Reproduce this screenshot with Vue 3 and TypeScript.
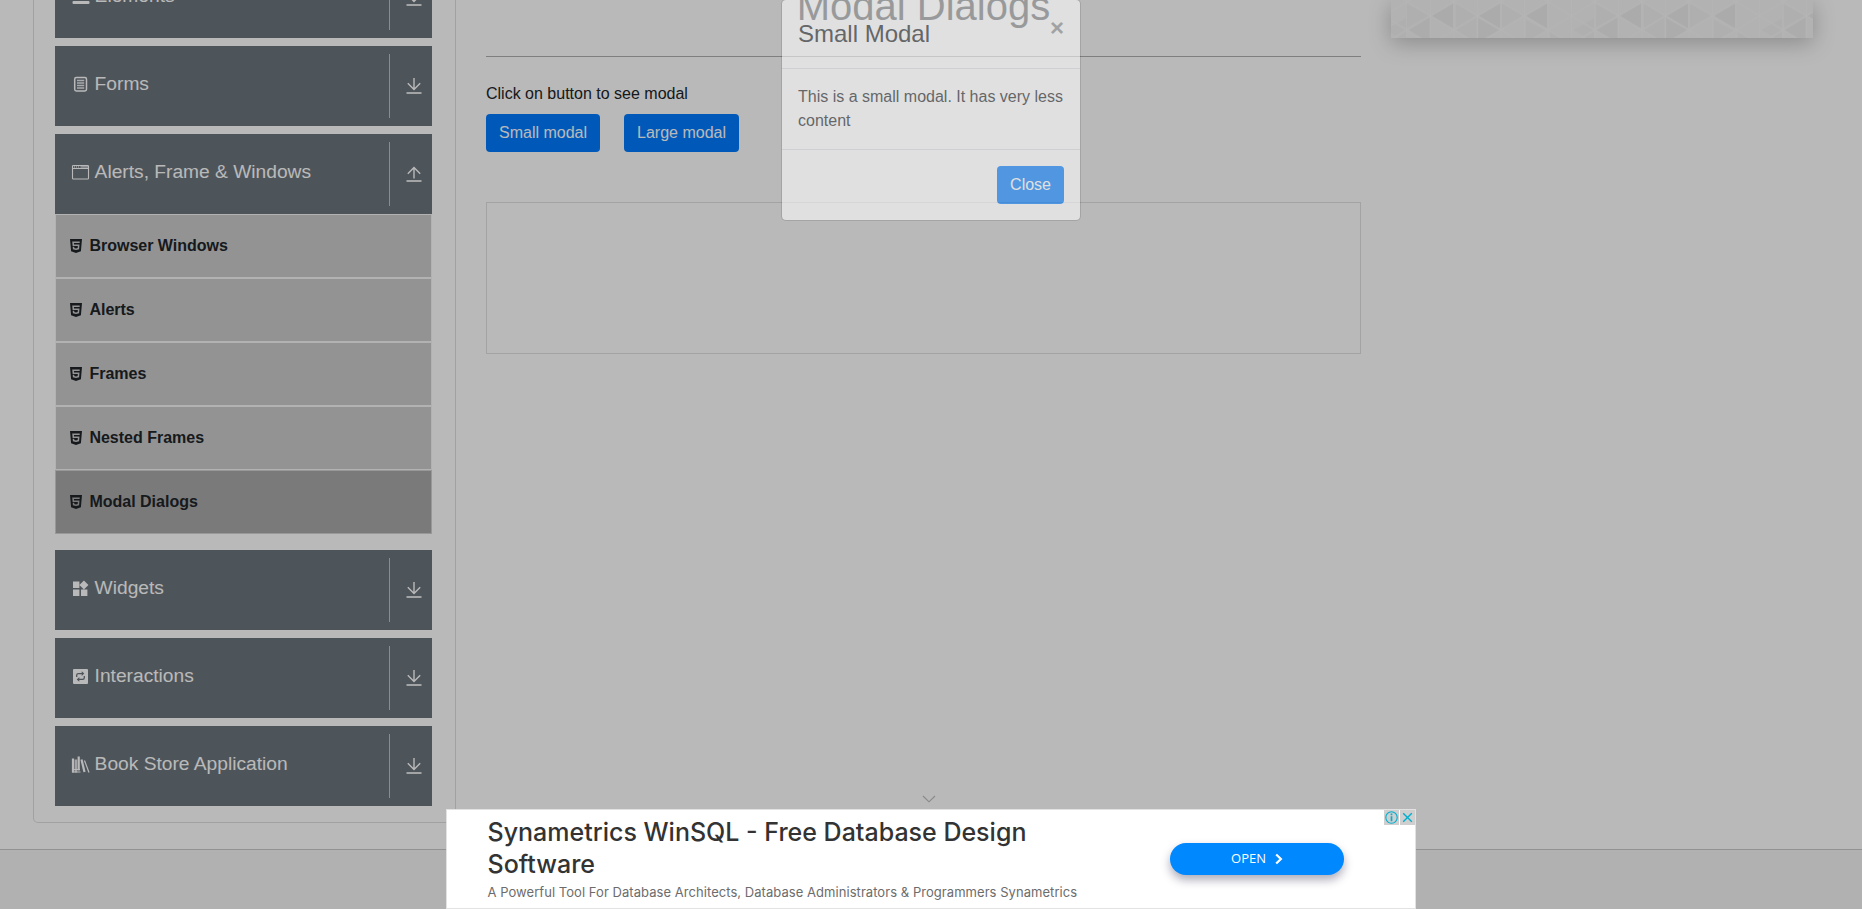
<script setup lang="ts">
interface Group {
  name: string
  icon: string
  open?: boolean
  items?: string[]
}

const groups: Group[] = [
  { name: 'Elements', icon: 'elements' },
  { name: 'Forms', icon: 'forms' },
  {
    name: 'Alerts, Frame & Windows',
    icon: 'window',
    open: true,
    items: ['Browser Windows', 'Alerts', 'Frames', 'Nested Frames', 'Modal Dialogs'],
  },
  { name: 'Widgets', icon: 'widgets' },
  { name: 'Interactions', icon: 'interactions' },
  { name: 'Book Store Application', icon: 'books' },
]
const activeItem = 'Modal Dialogs'
</script>

<template>
  <div class="page">
    <div class="columns">
      <nav class="sidebar">
        <section v-for="g in groups" :key="g.name" class="group">
          <header class="group-head">
            <svg class="group-icon" width="20" height="20" viewBox="0 0 20 20">
              <g v-if="g.icon === 'elements'" fill="currentColor">
                <rect x="1.5" y="3" width="17" height="3" rx="1" />
                <rect x="1.5" y="9" width="17" height="3" rx="1" />
                <rect x="1.5" y="15" width="17" height="3" rx="1" />
              </g>
              <g v-else-if="g.icon === 'forms'" fill="none" stroke="currentColor">
                <rect x="3.7" y="3.6" width="11.8" height="13.3" rx="1.6" stroke-width="1.5" />
                <path d="M6 6.500h7.200M6 9h7.200M6 11.500h7.200M6 14h7.200" stroke-width="1.300" opacity=".85" />
              </g>
              <g v-else-if="g.icon === 'window'" fill="none" stroke="currentColor">
                <rect x="1.500" y="3.500" width="16" height="13.500" rx=".8" stroke-width="1.100" />
                <path d="M1.500 6.500h16" stroke-width="1" />
                <path d="M3 4.900h1M5 4.900h1M7 4.900h1M9.500 4.900h7.500" stroke-width="1.600" opacity=".6" />
              </g>
              <g v-else-if="g.icon === 'widgets'" fill="currentColor">
                <path transform="translate(-.4 1.100) scale(.8)" d="M13 13v8h8v-8h-8zM3 21h8v-8H3v8zM3 3v8h8V3H3zm13.66-1.31L11 7.34 16.66 13l5.66-5.66-5.66-5.65z" />
              </g>
              <g v-else-if="g.icon === 'interactions'">
                <rect x="2" y="3" width="15" height="15" rx="1" fill="currentColor" />
                <path class="loop" d="M5.700 11V9.200q0-1.600 1.600-1.600h4M13.300 10v1.800q0 1.600-1.600 1.600h-4" />
                <path class="loop-tip" d="M10.700 5.300l2.600 2.300-2.600 2.300zM8.300 11.100l-2.600 2.300 2.600 2.300z" />
              </g>
              <g v-else fill="none" stroke="currentColor">
                <path d="M2 4.500v14M7.700 2.500v14" stroke-width="2.200" />
                <path d="M4.900 5.500v13" stroke-width="2.600" opacity=".8" />
                <path d="M1 15.500h8M1 18h8.500" stroke-width="1" />
                <path d="M10.500 5.500l3 12.500" stroke-width="2.200" />
                <path d="M13.500 6.500l4.500 12" stroke-width="1.200" />
              </g>
            </svg>
            <span class="group-name">{{ g.name }}</span>
            <span class="toggle">
              <svg width="16" height="18" viewBox="0 0 16 18" fill="none" stroke="currentColor" stroke-width="1.4">
                <path v-if="g.open" d="M8 13.500V2.500M1.800 8.700L8 2.500l6.200 6.200" />
                <path v-else d="M8 1v11.500M1.800 6.200L8 12.400l6.200-6.200" />
                <path d="M.5 16h15" stroke-width="1.6" />
              </svg>
            </span>
          </header>
          <ul v-if="g.items" class="items">
            <li v-for="i in g.items" :key="i" :class="{ active: i === activeItem }">
              <svg width="12" height="16" viewBox="0 0 384 512" fill="currentColor">
                <path d="M0 32l34.9 395.8L191.5 480l157.6-52.2L384 32H0zm308.2 127.9H124.4l4.1 49.4h175.6l-13.6 148.4-97.9 27v.3h-1.1l-98.7-27.3-6-75.8h47.7L138 320l53.5 14.5 53.7-14.5 6-62.2H84.3L71.5 112.2h241.1l-4.4 47.7z" />
              </svg>
              <span>{{ i }}</span>
            </li>
          </ul>
        </section>
      </nav>

      <main class="main">
        <h1>Modal Dialogs</h1>
        <hr />
        <p>Click on button to see modal</p>
        <div class="buttons">
          <button class="btn">Small modal</button>
          <button class="btn">Large modal</button>
        </div>
        <div class="frame"></div>
      </main>

      <aside class="promo">
        <svg width="422" height="80" viewBox="0 0 422 80">
          <defs>
            <pattern id="tri" x="16" y="43.7" width="188" height="56.6" patternUnits="userSpaceOnUse">
              <rect width="188" height="56.6" fill="#f6f6f6" />
              <path fill="#f2f2f2" d="M48 28.300L69.500 15.700v25.200zM49 2L69.500 14 49 26zM95 2L116 14 95 26zM166 28.300l21-12v24zM143 30l21 12-21 12zM119 18l20 11-20 11zM0 2v24l22-12z" />
              <path fill="#ececec" d="M24.500 14.200L46 2v24.500zM71.500 14.200L93 2v24.500zM118.500 14.200L140 2v24.500z" />
              <path fill="#eee" d="M1 28.300L22.500 15.700v25.200zM71 16.500L92.500 28.300L71 40.500z" />
              <path
                fill="none"
                stroke="#f9f9f9"
                stroke-width="1.2"
                d="M0 0L94 56.600L188 0M0 56.600L94 0L188 56.600M0 28.300L47 56.600M0 28.300L47 0L141 56.600L188 28.300L141 0L47 56.600M23.500 0v56.600M47 0v56.600M70.500 0v56.600M94 0v56.600M117.500 0v56.600M141 0v56.600M164.500 0v56.600M188 0v56.600"
              />
            </pattern>
          </defs>
          <rect width="422" height="80" fill="url(#tri)" />
        </svg>
      </aside>
    </div>
    <footer class="footer"></footer>

    <div class="backdrop"></div>

    <div class="modal">
      <div class="modal-head">
        <span class="modal-title">Small Modal</span>
        <span class="modal-x">×</span>
      </div>
      <div class="modal-body">This is a small modal. It has very less content</div>
      <div class="modal-foot"><button class="btn">Close</button></div>
    </div>

    <svg class="collapse" width="14" height="8" viewBox="0 0 14 8" fill="none" stroke="#888" stroke-width="1.1">
      <path d="M1 1l6 5.800L13 1" />
    </svg>

    <div class="ad">
      <div class="ad-copy">
        <div class="ad-title">Synametrics WinSQL - Free Database Design<br />Software</div>
        <div class="ad-sub">A Powerful Tool For Database Architects, Database Administrators &amp; Programmers Synametrics</div>
      </div>
      <div class="ad-open">
        <span>OPEN</span>
        <svg width="8" height="12" viewBox="0 0 8 12" fill="none" stroke="#fff" stroke-width="2.2">
          <path d="M1.200 1.500L5.900 6 1.200 10.500" />
        </svg>
      </div>
      <div class="ad-tools">
        <svg width="15" height="15" viewBox="0 0 15 15">
          <circle cx="7.500" cy="7.500" r="5.700" fill="none" stroke="#00aecd" stroke-width="1.100" />
          <path d="M7.500 3.500v1.700M7.500 6.300v5" stroke="#00aecd" stroke-width="1.700" />
        </svg>
        <svg width="15" height="15" viewBox="0 0 15 15">
          <path d="M3.200 3.200l8.600 8.600M11.800 3.200l-8.600 8.600" stroke="#00aecd" stroke-width="1.400" />
        </svg>
      </div>
    </div>
  </div>
</template>

<style>
body {
  margin: 0;
  overflow: hidden;
}
</style>

<style scoped>
* {
  box-sizing: border-box;
}
.page {
  position: relative;
  height: 909px;
  overflow: hidden;
  background: #fff;
  color: #212529;
  font: 16px/24px "Liberation Sans", Arial, sans-serif;
}
.columns {
  display: grid;
  grid-template-columns: 423px 875px 422px;
  column-gap: 30px;
  padding-left: 33px;
  height: 849px;
  align-items: start;
}
.sidebar {
  height: 823px;
  border: 1px solid #dedede;
  border-top: 0;
  border-radius: 0 0 5px 5px;
  padding: 0 23px 0 21px;
  display: flex;
  flex-direction: column;
  gap: 8px;
  overflow: hidden;
}
.group:first-child {
  margin-top: -42px;
}
.group-head {
  height: 80px;
  background: #6c757d;
  color: #fff;
  display: flex;
  align-items: center;
  padding-left: 16px;
}
.group-icon {
  flex: none;
  margin: 0 3.6px 4px 0;
}
.loop {
  fill: none;
  stroke: #6c757d;
  stroke-width: 1.3;
}
.loop-tip {
  fill: #6c757d;
}
.group-name {
  font-size: 19.2px;
  flex: 1;
  padding-bottom: 5px;
}
.toggle {
  width: 43px;
  height: 64px;
  border-left: 1px solid #bfc2c4;
  display: flex;
  align-items: center;
  padding: 0 0 1px 16px;
}
.items {
  list-style: none;
  margin: 0 0 8px;
  padding: 0;
}
.items li {
  height: 64px;
  border: 1px solid #f5f5f5;
  background: #cbcbcb;
  display: flex;
  align-items: center;
  gap: 7.4px;
  padding: 0 14px 1px;
  font-weight: 700;
}
.items li.active {
  background: #a9a9a9;
  border-color: #d2d2d2;
}
.main {
  display: flex;
  flex-direction: column;
}
h1 {
  margin: -18px 0 0;
  font-size: 40px;
  line-height: 48px;
  font-weight: 400;
  text-align: center;
}
hr {
  width: 100%;
  height: 1px;
  border: 0;
  margin: 26px 0 0;
  background: #b0b0b0;
}
p {
  margin: 25px 0 8px;
}
.buttons {
  display: flex;
  gap: 24px;
}
.btn {
  height: 38px;
  border: 0;
  border-radius: 4px;
  padding: 0 13px;
  background: #007bff;
  color: #fff;
  font: inherit;
}
.frame {
  height: 152px;
  margin-top: 50px;
  border: 1px solid #e1e1e1;
}
.promo {
  height: 38px;
  display: flex;
  align-items: flex-end;
  box-shadow: 0 5px 22px rgba(0, 0, 0, 0.25);
}
.promo svg {
  display: block;
}
.footer {
  height: 60px;
  border-top: 1px solid #c9c9c9;
  background: #f4f4f4;
}
.backdrop {
  position: absolute;
  inset: 0;
  background: rgba(0, 0, 0, 0.275);
}
.modal {
  position: absolute;
  left: 781px;
  top: -1px;
  width: 300px;
  background: #fff;
  background-clip: padding-box;
  border: 1px solid rgba(0, 0, 0, 0.2);
  border-radius: 5px;
  opacity: 0.557;
}
.modal-head {
  height: 69px;
  display: flex;
  justify-content: space-between;
  padding: 16px;
  border-bottom: 1px solid #dee2e6;
}
.modal-title {
  font-size: 24px;
  line-height: 36px;
}
.modal-x {
  font-size: 24px;
  font-weight: 700;
  opacity: 0.5;
}
.modal-body {
  padding: 16px;
}
.modal-foot {
  height: 71px;
  border-top: 1px solid #dee2e6;
  padding: 16px;
  display: flex;
  justify-content: flex-end;
}
.collapse {
  position: absolute;
  left: 922px;
  top: 795px;
}
.ad {
  position: absolute;
  left: 446px;
  top: 809px;
  width: 970px;
  height: 100px;
  background: #fff;
  border: 1px solid #e2e2e2;
  display: flex;
  font-family: Inter, "Open Sans", sans-serif;
}
.ad-copy {
  width: 723px;
  padding: 6px 0 0 40.5px;
  white-space: nowrap;
}
.ad-title {
  font-size: 25px;
  line-height: 32px;
  font-weight: 500;
  color: #333;
}
.ad-sub {
  margin-top: 2px;
  font-size: 13px;
  line-height: 20px;
  letter-spacing: 0.05px;
  color: #6c6c6c;
}
.ad-open {
  width: 174px;
  height: 32px;
  margin-top: 33px;
  border-radius: 16px;
  background: #0088ff;
  box-shadow: 0 5px 10px rgba(20, 20, 60, 0.35);
  color: #fff;
  font: 13px/32px "Open Sans", sans-serif;
  display: flex;
  justify-content: center;
  align-items: center;
  gap: 9px;
}
.ad-open span {
  margin-top: -2px;
}
.ad-tools {
  margin-left: auto;
  display: flex;
  gap: 1px;
}
.ad-tools svg {
  background: #cfcfcf;
}
</style>
